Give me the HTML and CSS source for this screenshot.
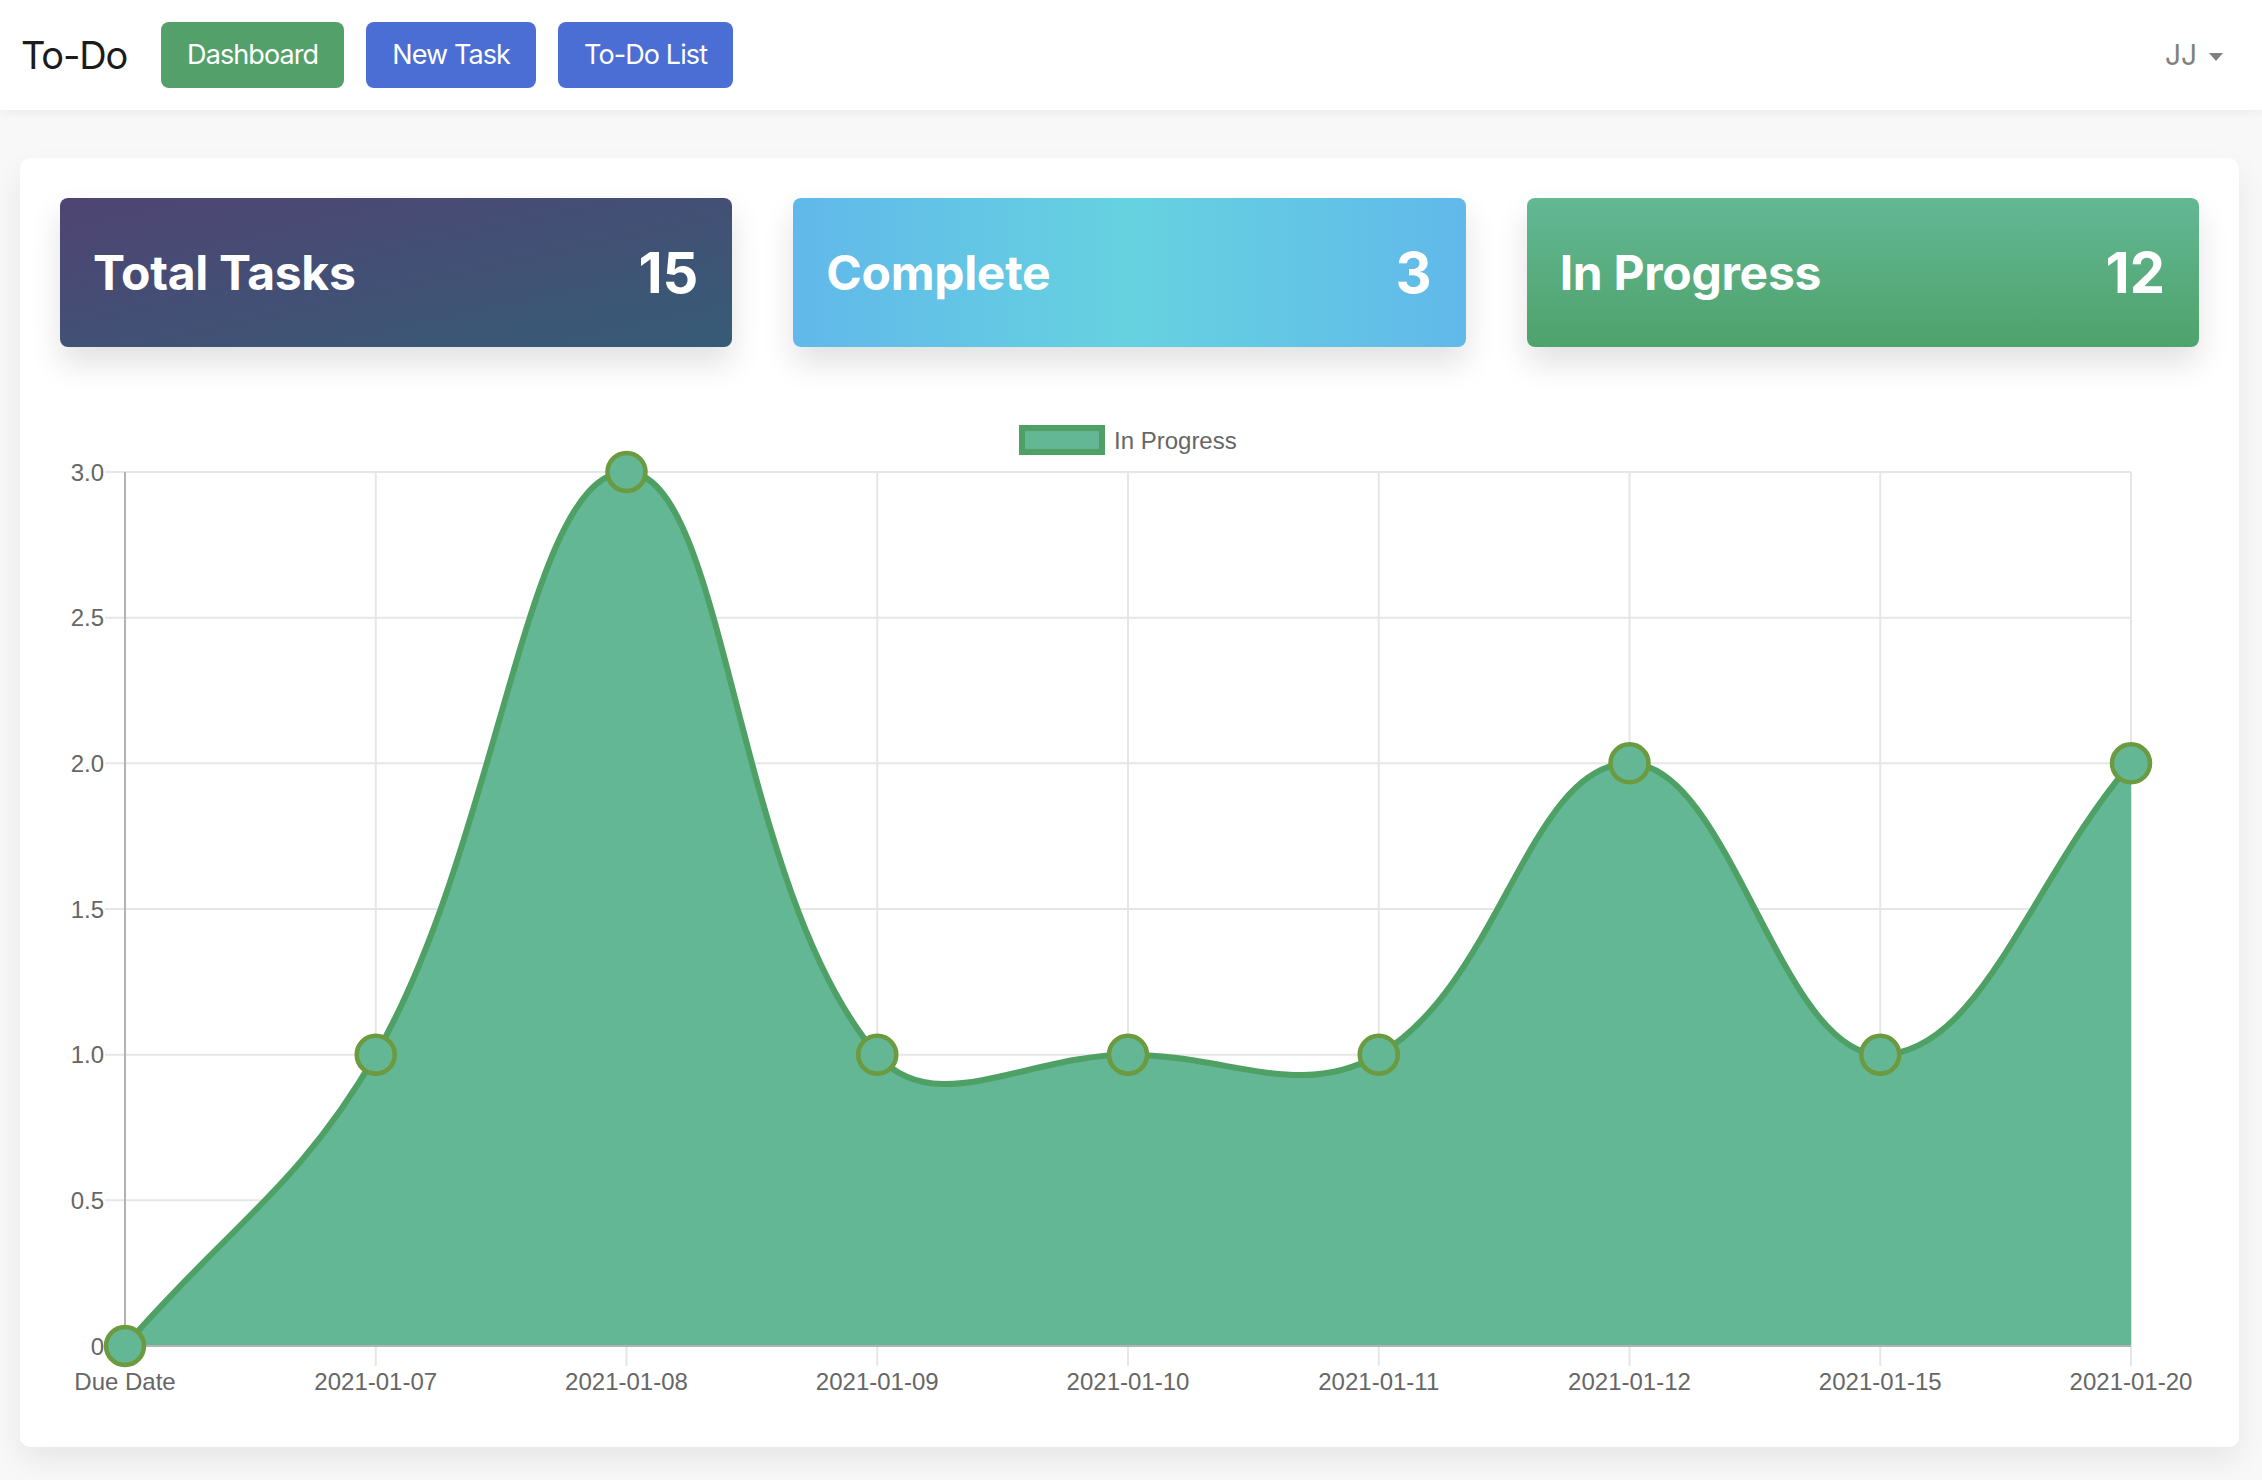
FILE: index.html
```html
<!DOCTYPE html>
<html lang="en">
<head>
<meta charset="utf-8">
<title>To-Do Dashboard</title>
<link rel="stylesheet" href="styles.css">
</head>
<body>
<nav class="navbar">
  <div class="nav-left">
    <a class="brand">To-Do</a>
    <a class="btn btn-green">Dashboard</a>
    <a class="btn btn-blue">New Task</a>
    <a class="btn btn-blue">To-Do List</a>
  </div>
  <div class="user">JJ<span class="caret"></span></div>
</nav>
<main class="page">
  <section class="card">
    <div class="stats">
      <div class="stat stat-total"><span class="stat-title">Total Tasks</span><span class="stat-num">15</span></div>
      <div class="stat stat-complete"><span class="stat-title">Complete</span><span class="stat-num">3</span></div>
      <div class="stat stat-progress"><span class="stat-title">In Progress</span><span class="stat-num">12</span></div>
    </div>
    <svg class="chart" viewBox="60 347 2139 1100" width="2139" height="1100" xmlns="http://www.w3.org/2000/svg">
      <!-- legend -->
      <rect class="legend-box" x="1022" y="428" width="80" height="24"/>
      <text class="lbl" x="1114" y="448.5">In Progress</text>

      <!-- grid -->
      <g class="grid">
        <line x1="105" y1="472" x2="2131" y2="472"/>
        <line x1="105" y1="617.67" x2="2131" y2="617.67"/>
        <line x1="105" y1="763.33" x2="2131" y2="763.33"/>
        <line x1="105" y1="909" x2="2131" y2="909"/>
        <line x1="105" y1="1054.67" x2="2131" y2="1054.67"/>
        <line x1="105" y1="1200.33" x2="2131" y2="1200.33"/>
        <line x1="105" y1="1346" x2="125" y2="1346"/>
        <line x1="375.75" y1="472" x2="375.75" y2="1366"/>
        <line x1="626.5" y1="472" x2="626.5" y2="1366"/>
        <line x1="877.25" y1="472" x2="877.25" y2="1366"/>
        <line x1="1128" y1="472" x2="1128" y2="1366"/>
        <line x1="1378.75" y1="472" x2="1378.75" y2="1366"/>
        <line x1="1629.5" y1="472" x2="1629.5" y2="1366"/>
        <line x1="1880.25" y1="472" x2="1880.25" y2="1366"/>
        <line x1="2131" y1="472" x2="2131" y2="1366"/>
      </g>
      <g class="axis">
        <line x1="125" y1="472" x2="125" y2="1366"/>
        <line x1="125" y1="1346" x2="2131" y2="1346"/>
      </g>

      <!-- y labels -->
      <g class="lbl ylbl">
        <text x="104" y="480.5">3.0</text>
        <text x="104" y="626">2.5</text>
        <text x="104" y="771.8">2.0</text>
        <text x="104" y="917.5">1.5</text>
        <text x="104" y="1063">1.0</text>
        <text x="104" y="1208.8">0.5</text>
        <text x="104" y="1354.5">0</text>
      </g>

      <!-- x labels -->
      <g class="lbl xlbl">
        <text x="125" y="1390">Due Date</text>
        <text x="375.75" y="1390">2021-01-07</text>
        <text x="626.5" y="1390">2021-01-08</text>
        <text x="877.25" y="1390">2021-01-09</text>
        <text x="1128" y="1390">2021-01-10</text>
        <text x="1378.75" y="1390">2021-01-11</text>
        <text x="1629.5" y="1390">2021-01-12</text>
        <text x="1880.25" y="1390">2021-01-15</text>
        <text x="2131" y="1390">2021-01-20</text>
      </g>

      <!-- area -->
      <path class="area" d="M125,1346 C225.3,1229.47 300.06,1186.58 375.75,1054.67 C500.66,836.98 526.2,472 626.5,472 C726.8,472 733.48,887.63 877.25,1054.67 C934.08,1120.7 1027.7,1054.67 1128,1054.67 C1228.3,1054.67 1299.55,1100.68 1378.75,1054.67 C1500.15,984.14 1529.2,763.33 1629.5,763.33 C1729.8,763.33 1779.95,1054.67 1880.25,1054.67 C1980.55,1054.67 2030.7,879.86 2131,763.33 L2131,1345 L125,1345 Z"/>
      <path class="line" d="M125,1346 C225.3,1229.47 300.06,1186.58 375.75,1054.67 C500.66,836.98 526.2,472 626.5,472 C726.8,472 733.48,887.63 877.25,1054.67 C934.08,1120.7 1027.7,1054.67 1128,1054.67 C1228.3,1054.67 1299.55,1100.68 1378.75,1054.67 C1500.15,984.14 1529.2,763.33 1629.5,763.33 C1729.8,763.33 1779.95,1054.67 1880.25,1054.67 C1980.55,1054.67 2030.7,879.86 2131,763.33"/>

      <!-- points -->
      <g class="pts">
        <circle cx="125" cy="1346" r="19"/>
        <circle cx="375.75" cy="1054.67" r="19"/>
        <circle cx="626.5" cy="472" r="19"/>
        <circle cx="877.25" cy="1054.67" r="19"/>
        <circle cx="1128" cy="1054.67" r="19"/>
        <circle cx="1378.75" cy="1054.67" r="19"/>
        <circle cx="1629.5" cy="763.33" r="19"/>
        <circle cx="1880.25" cy="1054.67" r="19"/>
        <circle cx="2131" cy="763.33" r="19"/>
      </g>
    </svg>
  </section>
</main>
</body>
</html>
```

FILE: styles.css
```css
* { box-sizing: border-box; }

html, body {
  margin: 0;
  padding: 0;
}

body {
  background: #f8f8f9;
  font-family: Inter, "Noto Sans", "Liberation Sans", sans-serif;
  width: 2262px;
  min-height: 1480px;
}

.navbar {
  height: 110px;
  background: #ffffff;
  display: flex;
  align-items: center;
  justify-content: space-between;
  padding: 0 39px 0 21px;
  box-shadow: 0 3px 10px rgba(0, 0, 0, 0.05);
  position: relative;
  z-index: 1;
}

.nav-left {
  display: flex;
  align-items: center;
  gap: 22px;
}

.brand {
  font-size: 38px;
  line-height: 1;
  color: #1b1b1b;
  margin-right: 12px;
  letter-spacing: -1.2px;
}

.btn {
  display: inline-block;
  font-size: 27px;
  line-height: 42px;
  padding: 12px 26px;
  border-radius: 8px;
  color: #ffffff;
  letter-spacing: -0.9px;
}

.btn-green { background: #54a06a; }
.btn-blue { background: #4a6ed4; }

.user {
  display: flex;
  align-items: center;
  font-size: 28px;
  color: #808080;
  line-height: 1;
}

.caret {
  display: inline-block;
  width: 0;
  height: 0;
  margin-left: 12px;
  margin-top: 4px;
  border-top: 8px solid #808080;
  border-left: 7.5px solid transparent;
  border-right: 7.5px solid transparent;
}

.page {
  padding: 48px 23px 0 20px;
}

.card {
  background: #ffffff;
  border-radius: 10px;
  padding: 40px 40px 0 40px;
  box-shadow: 0 14px 30px rgba(0, 0, 0, 0.07);
}

.stats {
  display: grid;
  grid-template-columns: repeat(3, 1fr);
  gap: 61px;
}

.stat {
  height: 149px;
  border-radius: 8px;
  display: flex;
  align-items: center;
  justify-content: space-between;
  padding: 0 34px 0 33px;
  color: #ffffff;
  box-shadow: 0 16px 32px rgba(0, 0, 0, 0.12);
}

.stat-title {
  font-size: 48px;
  font-weight: 700;
  line-height: 1;
  letter-spacing: -0.3px;
}

.stat-num {
  font-size: 56px;
  font-weight: 700;
  line-height: 1;
}

.stat-total {
  background: linear-gradient(to bottom right, #4f4472, #365c77);
}

.stat-complete {
  background: linear-gradient(to right, #61b8ea, #66d2e0 50%, #61b9ea);
}

.stat-progress {
  background: linear-gradient(to bottom, #63b895, #4ea26a);
}

.chart {
  display: block;
}

.chart .grid line {
  stroke: #e6e6e6;
  stroke-width: 2;
}

.chart .axis line {
  stroke: #b3b3b3;
  stroke-width: 2;
}

.chart .lbl,
.chart .lbl text {
  font-family: "Liberation Sans", Arial, sans-serif;
  font-size: 24px;
  fill: #666666;
}

.chart .ylbl text { text-anchor: end; }
.chart .xlbl text { text-anchor: middle; }

.legend-box {
  fill: #63b794;
  stroke: #4ea065;
  stroke-width: 6;
}

.area {
  fill: #63b794;
}

.line {
  fill: none;
  stroke: #4ea065;
  stroke-width: 6;
}

.pts circle {
  fill: #63b794;
  stroke: #6b9a3f;
  stroke-width: 4.5;
}
```
